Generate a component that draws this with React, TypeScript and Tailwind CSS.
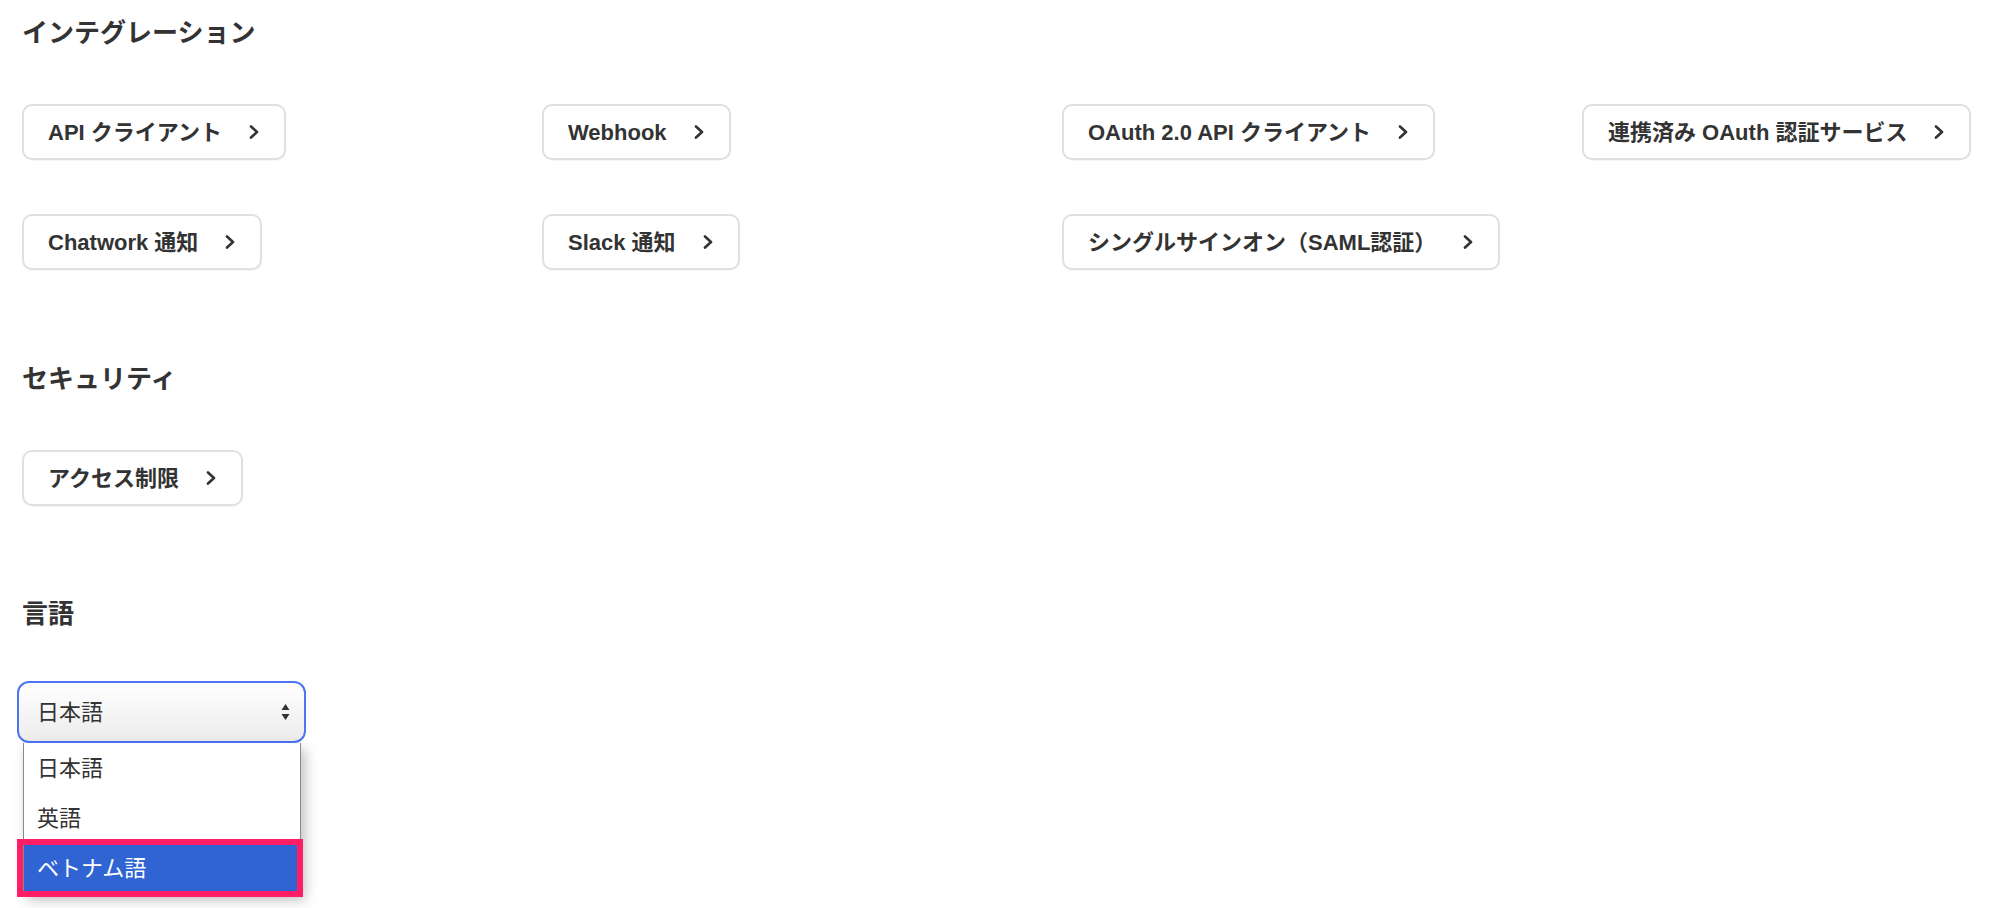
import React from 'react';

const integrations: string[][] = [
    ['API クライアント', 'Webhook', 'OAuth 2.0 API クライアント', '連携済み OAuth 認証サービス'],
    ['Chatwork 通知', 'Slack 通知', 'シングルサインオン（SAML認証）'],
];

function Chevron() {
    return (
        <svg width="10" height="14" viewBox="0 0 10 14" fill="none" className="shrink-0">
            <polyline points="2,1.5 8,7 2,12.5" stroke="#333" strokeWidth="2.6" strokeLinecap="round" strokeLinejoin="round" />
        </svg>
    );
}

function LinkButton({ label }: { label: string }) {
    return (
        <button className="inline-flex h-[56px] items-center gap-[27px] rounded-[10px] border-2 border-[#e0e0e0] bg-white pl-[24px] pr-[25px] text-[22px] font-bold text-[#333] shadow-[0_1px_1px_rgba(0,0,0,0.04)] whitespace-nowrap">
            <span>{label}</span>
            <Chevron />
        </button>
    );
}

function SectionTitle({ children, className = '' }: { children: React.ReactNode; className?: string }) {
    return <h2 className={`text-[26px] font-bold leading-[39px] text-[#333] ${className}`}>{children}</h2>;
}

export default function App() {
    return (
        <div className="min-h-screen w-full overflow-hidden bg-white pl-[22px] pt-[14px] font-['Liberation_Sans','Noto_Sans_CJK_JP',sans-serif] text-[#333]">
            <SectionTitle>インテグレーション</SectionTitle>
            <div className="mt-[51px] grid grid-cols-[520px_520px_520px_1fr] items-start justify-items-start gap-y-[54px]">
                {integrations.flat().map((label) => (
                    <LinkButton key={label} label={label} />
                ))}
            </div>

            <SectionTitle className="mt-[90px]">セキュリティ</SectionTitle>
            <div className="mt-[51px]">
                <LinkButton label="アクセス制限" />
            </div>

            <SectionTitle className="mt-[89px]">言語</SectionTitle>
            <div className="mt-[47px] w-[289px] -ml-[5px]">
                <div className="flex h-[62px] items-center justify-between rounded-[12px] border-2 border-[#4b75f3] bg-gradient-to-b from-white to-[#ececec] pl-[18px] pr-[14px] text-[22px] text-[#333]">
                    <span>日本語</span>
                    <svg width="9" height="18" viewBox="0 0 9 18" className="shrink-0">
                        <polygon points="4.5,1 8.5,7 0.5,7" fill="#333" />
                        <polygon points="0.5,11 8.5,11 4.5,17" fill="#333" />
                    </svg>
                </div>
                <div className="ml-[6px] w-[278px] border-x border-b border-[#8a8a8a] bg-white text-[22px] text-[#333] shadow-[4px_6px_12px_rgba(0,0,0,0.25)]">
                    <div className="flex h-[50px] items-center pl-[13px]">日本語</div>
                    <div className="flex h-[50px] items-center pl-[13px]">英語</div>
                    <div className="relative flex h-[50px] items-center bg-[#2f64d2] pl-[13px] text-white">
                        ベトナム語
                        <div className="absolute -top-[4px] -bottom-[4px] -left-[7px] -right-[3px] border-[6px] border-[#ff1d67]" />
                    </div>
                </div>
            </div>
        </div>
    );
}
